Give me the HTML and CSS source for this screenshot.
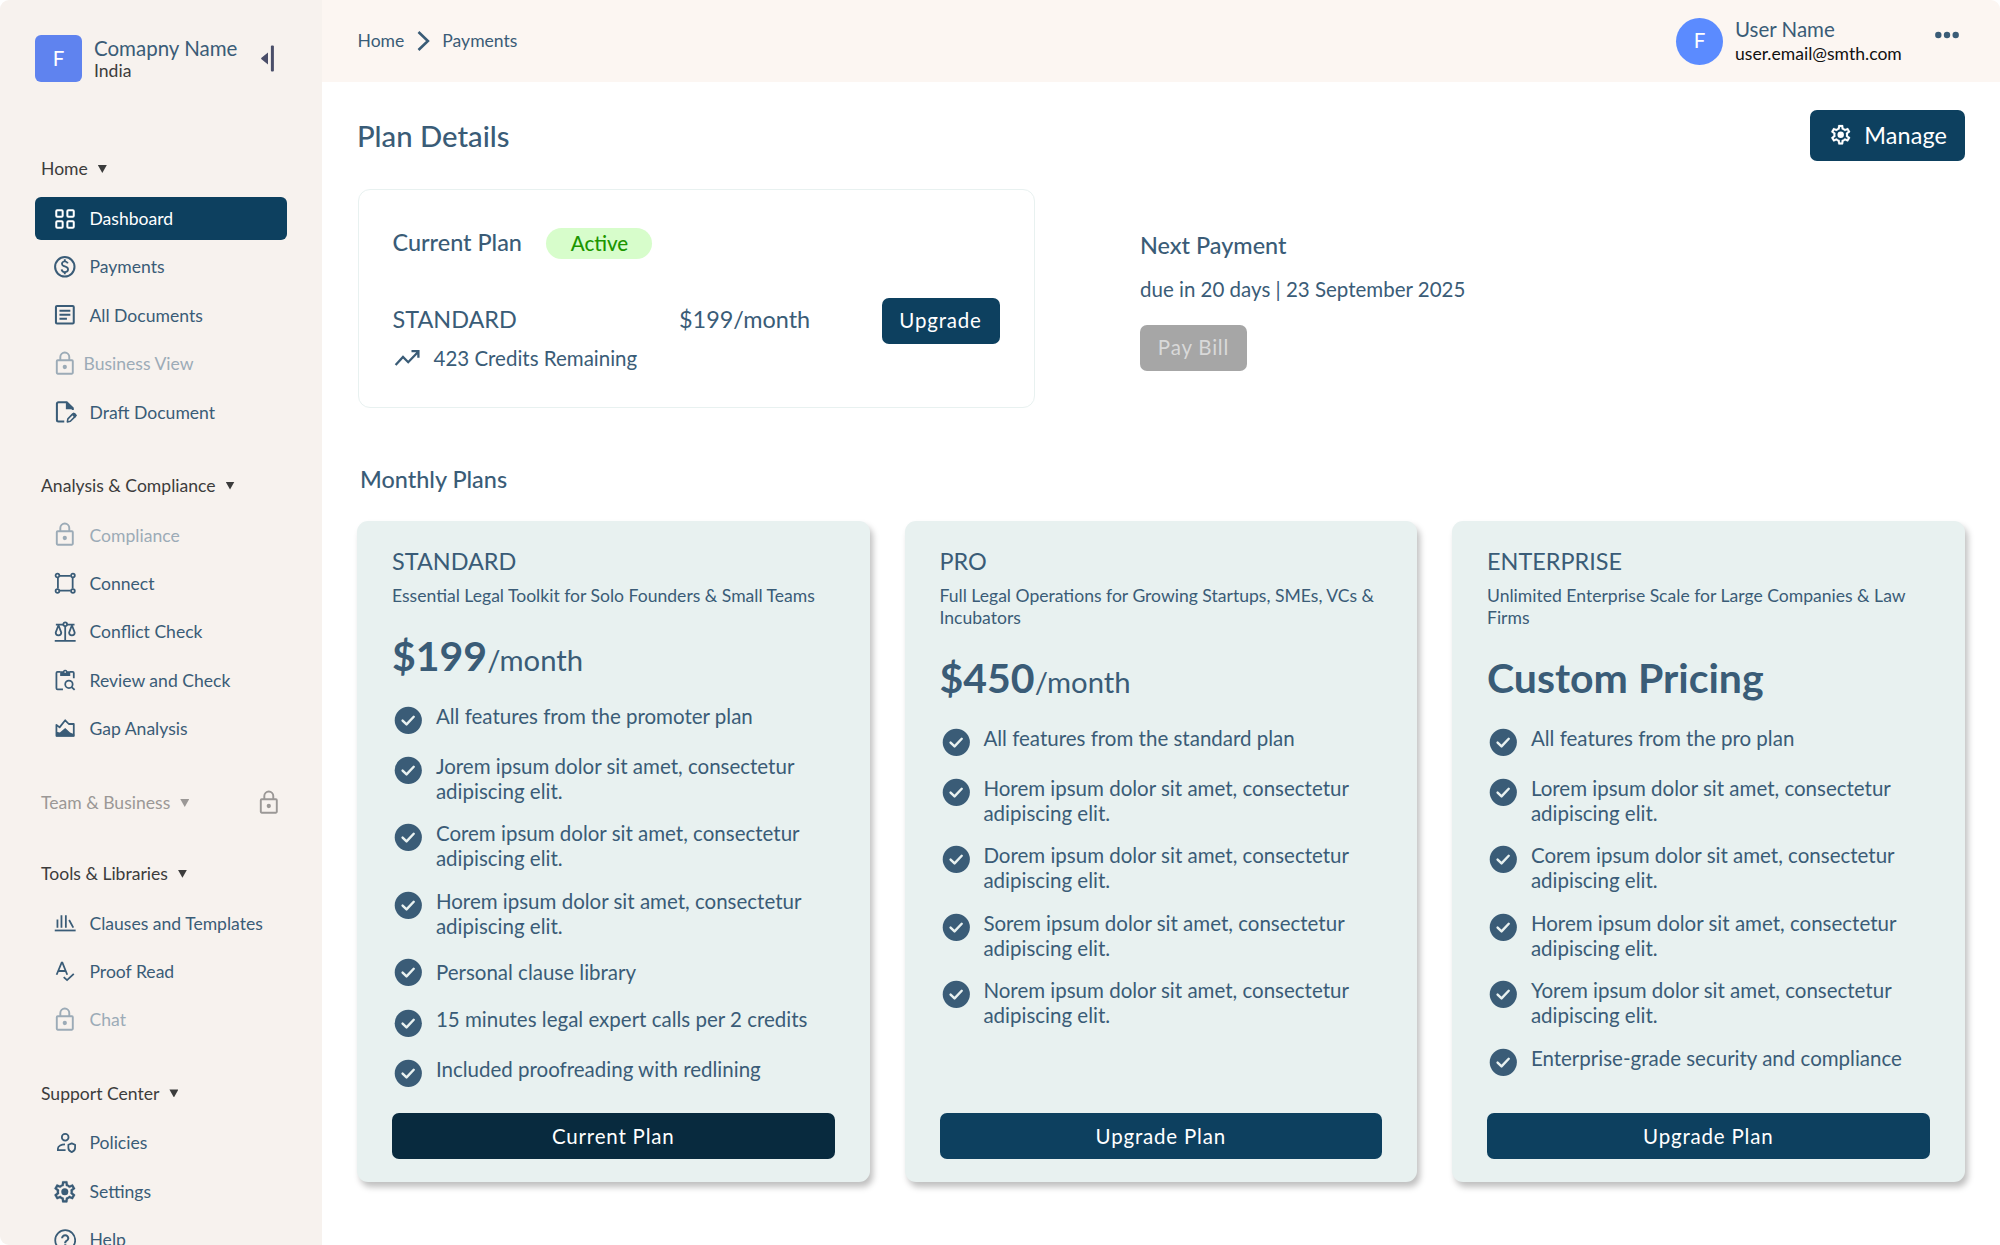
FILE: index.html
```html
<!DOCTYPE html>
<html lang="en">
<head>
<meta charset="utf-8">
<title>Payments</title>
<link rel="stylesheet" href="styles.css">
</head>
<body>
<svg class="sprite" aria-hidden="true">
  <symbol id="lock" viewBox="0 0 24 24"><rect x="4.5" y="8.7" width="15" height="12.6" rx=".8" fill="none" stroke="currentColor" stroke-width="1.8"/><path d="M7.800 8.700V5.600a4.200 4.200 0 0 1 8.400 0v3.100" fill="none" stroke="currentColor" stroke-width="1.8"/><circle cx="12" cy="15" r="2" fill="currentColor"/></symbol>
  <symbol id="check" viewBox="0 0 24 24"><circle cx="12" cy="12" r="10" fill="currentColor"/><path d="M7.8 12.2l2.9 2.8 5.3-5.6" fill="none" stroke="#e8f1f0" stroke-width="1.8" stroke-linecap="round" stroke-linejoin="round"/></symbol>
  <symbol id="gear" viewBox="0 0 24 24"><path fill="currentColor" stroke="currentColor" stroke-width=".2" d="M19.43 12.98c.04-.32.07-.64.07-.98 0-.34-.03-.66-.07-.98l2.11-1.65c.19-.15.24-.42.12-.64l-2-3.46c-.09-.16-.26-.25-.44-.25-.06 0-.12.01-.17.03l-2.49 1c-.52-.4-1.08-.73-1.69-.98l-.38-2.65C14.46 2.18 14.25 2 14 2h-4c-.25 0-.46.18-.49.42l-.38 2.65c-.61.25-1.17.59-1.69.98l-2.49-1c-.06-.02-.12-.03-.18-.03-.17 0-.34.09-.43.25l-2 3.46c-.13.22-.07.49.12.64l2.11 1.65c-.04.32-.07.65-.07.98 0 .33.03.66.07.98l-2.11 1.65c-.19.15-.24.42-.12.64l2 3.46c.09.16.26.25.44.25.06 0 .12-.01.17-.03l2.49-1c.52.4 1.08.73 1.69.98l.38 2.65c.03.24.24.42.49.42h4c.25 0 .46-.18.49-.42l.38-2.65c.61-.25 1.17-.59 1.69-.98l2.49 1c.06.02.12.03.18.03.17 0 .34-.09.43-.25l2-3.46c.12-.22.07-.49-.12-.64l-2.11-1.65zm-1.98-1.71c.04.31.05.52.05.73 0 .21-.02.43-.05.73l-.14 1.13.89.7 1.08.84-.7 1.21-1.27-.51-1.04-.42-.9.68c-.43.32-.84.56-1.25.73l-1.06.43-.16 1.13-.2 1.35h-1.4l-.19-1.35-.16-1.13-1.06-.43c-.43-.18-.83-.41-1.23-.71l-.91-.7-1.06.43-1.27.51-.7-1.21 1.08-.84.89-.7-.14-1.13c-.03-.31-.05-.54-.05-.74s.02-.43.05-.73l.14-1.13-.89-.7-1.08-.84.7-1.21 1.27.51 1.04.42.9-.68c.43-.32.84-.56 1.25-.73l1.06-.43.16-1.13.2-1.35h1.39l.19 1.35.16 1.13 1.06.43c.43.18.83.41 1.23.71l.91.7 1.06-.43 1.27-.51.7 1.21-1.07.85-.89.7.14 1.13z"/><circle cx="12" cy="12" r="3.3" fill="currentColor"/></symbol>
</svg>

<div class="app">
  <aside class="sidebar">
    <div class="company">
      <div class="logo">F</div>
      <div class="company-text">
        <div class="name">Comapny Name</div>
        <div class="place">India</div>
      </div>
      <svg class="collapse" viewBox="0 0 13 27"><path d="M7 7.5v12L.8 14.6a1.4 1.4 0 0 1 0-2.2z" fill="#4a4e69"/><rect x="9.9" y=".5" width="3" height="26" rx="1" fill="#4a4e69"/></svg>
    </div>

    <section class="group">
      <h2 class="group-title">Home <i class="caret"></i></h2>
      <a class="item active"><svg class="icon" viewBox="0 0 24 24"><g class="line"><rect x="4" y="4" width="6" height="6" rx=".9"/><rect x="14.4" y="4" width="6" height="6" rx=".9"/><rect x="4" y="14.4" width="6" height="6" rx=".9"/><rect x="14.4" y="14.4" width="6" height="6" rx=".9"/></g></svg>Dashboard</a>
      <a class="item"><svg class="icon" viewBox="0 0 24 24"><circle class="line" cx="12" cy="12" r="9.1"/><path fill="currentColor" d="M12.89 11.1c-1.78-.59-2.64-.96-2.64-1.9 0-1.02 1.11-1.39 1.81-1.39 1.31 0 1.79.99 1.9 1.34l1.58-.67c-.15-.44-.82-1.91-2.66-2.23V5h-1.75v1.26c-2.6.56-2.62 2.85-2.62 2.96 0 2.27 2.25 2.91 3.35 3.31 1.58.56 2.28 1.07 2.28 2.03 0 1.13-1.05 1.61-1.98 1.61-1.82 0-2.34-1.87-2.4-2.09L8.1 14.75c.63 2.19 2.28 2.78 3.02 2.96V19h1.75v-1.24c.52-.09 3.02-.59 3.02-3.22.01-1.39-.6-2.61-3-3.44z"/></svg>Payments</a>
      <a class="item"><svg class="icon" viewBox="0 0 24 24"><rect class="line" x="3.7" y="3.8" width="16.7" height="16.4" rx="1"/><path class="line" d="M7 8.2h10.2M7 12h10.2M7 15.8h7"/></svg>All Documents</a>
      <a class="item locked tight"><svg class="icon"><use href="#lock"/></svg>Business View</a>
      <a class="item"><svg class="icon" viewBox="0 0 24 24"><path class="line" d="M11.5 21H6a1.4 1.4 0 0 1-1.4-1.4V4.4A1.4 1.4 0 0 1 6 3h7.8l5.7 5.7v1.6"/><path fill="currentColor" d="M13 2.6l6.9 6.900H13z"/><path d="M14.900 18.600l4.600-4.600a1.300 1.300 0 0 1 1.900 0l.4.4a1.300 1.300 0 0 1 0 1.900l-4.600 4.600-2.800.6z" fill="none" stroke="currentColor" stroke-width="1.5" stroke-linejoin="round"/><path fill="currentColor" d="M18.400 14.600l2-1.900 3 2.800-2 2.200z"/></svg>Draft Document</a>
    </section>

    <section class="group">
      <h2 class="group-title">Analysis &amp; Compliance <i class="caret"></i></h2>
      <a class="item locked"><svg class="icon"><use href="#lock"/></svg>Compliance</a>
      <a class="item"><svg class="icon snug" viewBox="0 0 24 24"><g class="line"><path d="M6.2 4.2h11.6M6.2 20h11.6M4.2 6.2v11.6M20 6.2v11.6"/><circle cx="3.7" cy="3.7" r="2"/><circle cx="20.3" cy="3.7" r="2"/><circle cx="3.7" cy="20.3" r="2"/><circle cx="20.3" cy="20.3" r="2"/></g></svg>Connect</a>
      <a class="item"><svg class="icon snug" viewBox="0 0 24 24"><g class="line"><path d="M.8 21.200h22.400M12 5.400v15.800"/><path d="M2 3.800h8M14 3.800h8"/><circle cx="12" cy="3.400" r="2"/><path stroke-linejoin="round" d="M4.800 4.600L1.800 12.400a3 3 0 0 0 6 0zM19.200 4.600l-3 7.800a3 3 0 0 0 6 0z"/></g></svg>Conflict Check</a>
      <a class="item"><svg class="icon snug" viewBox="0 0 24 24"><path class="line" d="M9.600 21.800H3.800a1.200 1.200 0 0 1-1.200-1.200V4.300a1.200 1.200 0 0 1 1.200-1.200h3M17 3.100h3a1.200 1.200 0 0 1 1.200 1.200v5.500"/><path fill="currentColor" d="M6.600 2.300h3a2.600 2.600 0 0 1 4.800 0h3v5.200H6.600z"/><circle cx="12" cy="3.200" r=".9" fill="#f7f2ee"/><circle class="line" cx="16" cy="16.400" r="4"/><path class="line" d="M18.900 19.300l3.200 3.200"/></svg>Review and Check</a>
      <a class="item"><svg class="icon snug" viewBox="0 0 24 24"><path class="line" stroke-linejoin="round" d="M2.600 20.100V8.400l3.400 2.700 6-7.600 3.900 4h5.300v12.600z"/><path fill="currentColor" d="M2.300 21v-5.200l4 .8 5.700-4.800 5.200 4.800 4.500 2V21z"/></svg>Gap Analysis</a>
    </section>

    <section class="group team">
      <h2 class="group-title muted">Team &amp; Business <i class="caret"></i><svg class="icon end"><use href="#lock"/></svg></h2>
    </section>

    <section class="group">
      <h2 class="group-title">Tools &amp; Libraries <i class="caret"></i></h2>
      <a class="item"><svg class="icon snug" viewBox="0 0 24 24"><g class="line"><path d="M.8 19.800h22.400"/><path d="M3.700 8v9M8 3.500V17M12.700 3.500V17M16.200 8.600l4.500 8.200"/></g></svg>Clauses and Templates</a>
      <a class="item"><svg class="icon snug" viewBox="0 0 24 24"><path class="line" d="M2.800 15.800L8.200 2.800h.8l5.200 13M4.600 11.800h7.900"/><path class="line" d="M10.400 18.400l3.600 3.200 7.200-6.800"/></svg>Proof Read</a>
      <a class="item locked"><svg class="icon"><use href="#lock"/></svg>Chat</a>
    </section>

    <section class="group">
      <h2 class="group-title">Support Center <i class="caret"></i></h2>
      <a class="item"><svg class="icon snug" viewBox="0 0 24 24"><g class="line"><circle cx="12" cy="5.600" r="3.600"/><path d="M11.800 13.200c-3.800 0-7.600 1.600-7.600 4.600v1.700h8.200"/><path stroke-linejoin="round" d="M19 12.200l3.600 1.500v3.500c0 2-1.500 3.500-3.600 4.300-2.100-.8-3.600-2.300-3.600-4.300v-3.500z"/></g></svg>Policies</a>
      <a class="item"><svg class="icon"><use href="#gear"/></svg>Settings</a>
      <a class="item"><svg class="icon snug" viewBox="0 0 24 24"><circle class="line" cx="12" cy="12" r="10.700"/><path fill="currentColor" d="M11 18.500h2.200v-2.200H11v2.200zm1-13c-2.430 0-4.400 1.970-4.400 4.400h2.200c0-1.210.99-2.200 2.200-2.200s2.200.99 2.200 2.200c0 2.200-3.300 1.930-3.300 5.500h2.200c0-2.480 3.300-2.750 3.300-5.500 0-2.430-1.970-4.400-4.400-4.400z"/></svg>Help</a>
    </section>
  </aside>

  <div class="main">
    <header class="topbar">
      <nav class="crumbs">
        <span>Home</span>
        <svg class="chevron" viewBox="0 0 13 20"><path d="M1.500 1l9.400 9-9.400 9" fill="none" stroke="currentColor" stroke-width="2.600"/></svg>
        <span>Payments</span>
      </nav>
      <div class="user">
        <div class="avatar">F</div>
        <div class="user-text">
          <div class="name">User Name</div>
          <div class="email">user.email@smth.com</div>
        </div>
        <svg class="dots" viewBox="0 0 24 8"><circle cx="3.300" cy="4" r="3.200"/><circle cx="12" cy="4" r="3.200"/><circle cx="20.700" cy="4" r="3.200"/></svg>
      </div>
    </header>

    <main class="content">
      <div class="title-row">
        <h1>Plan Details</h1>
        <button class="btn manage"><svg class="icon"><use href="#gear"/></svg>Manage</button>
      </div>

      <div class="overview">
        <section class="current">
          <div class="current-head"><h3>Current Plan</h3><span class="pill">Active</span></div>
          <div class="current-row">
            <span class="plan-name">STANDARD</span>
            <span class="plan-price">$199/month</span>
            <button class="btn">Upgrade</button>
          </div>
          <div class="credits">
            <svg viewBox="0 0 26 18"><path d="M1.600 16l7.400-8 5.200 5.200L24 3M17.500 2.200h6.900v6.600" fill="none" stroke="currentColor" stroke-width="2.300"/></svg>
            423 Credits Remaining
          </div>
        </section>
        <section class="next">
          <h3>Next Payment</h3>
          <p>due in 20 days | 23 September 2025</p>
          <button class="btn disabled">Pay Bill</button>
        </section>
      </div>

      <h3 class="plans-title">Monthly Plans</h3>
      <div class="plans">
        <article class="plan">
          <h4>STANDARD</h4>
          <p class="sub">Essential Legal Toolkit for Solo Founders &amp; Small Teams</p>
          <div class="price">$199<small>/month</small></div>
          <ul>
            <li><svg><use href="#check"/></svg>All features from the promoter plan</li>
            <li><svg><use href="#check"/></svg>Jorem ipsum dolor sit amet, consectetur adipiscing elit.</li>
            <li><svg><use href="#check"/></svg>Corem ipsum dolor sit amet, consectetur adipiscing elit.</li>
            <li><svg><use href="#check"/></svg>Horem ipsum dolor sit amet, consectetur adipiscing elit.</li>
            <li class="centered"><svg><use href="#check"/></svg>Personal clause library</li>
            <li><svg><use href="#check"/></svg>15 minutes legal expert calls per 2 credits</li>
            <li><svg><use href="#check"/></svg>Included proofreading with redlining</li>
          </ul>
          <button class="btn chosen">Current Plan</button>
        </article>
        <article class="plan">
          <h4>PRO</h4>
          <p class="sub">Full Legal Operations for Growing Startups, SMEs, VCs &amp; Incubators</p>
          <div class="price">$450<small>/month</small></div>
          <ul>
            <li><svg><use href="#check"/></svg>All features from the standard plan</li>
            <li><svg><use href="#check"/></svg>Horem ipsum dolor sit amet, consectetur adipiscing elit.</li>
            <li><svg><use href="#check"/></svg>Dorem ipsum dolor sit amet, consectetur adipiscing elit.</li>
            <li><svg><use href="#check"/></svg>Sorem ipsum dolor sit amet, consectetur adipiscing elit.</li>
            <li><svg><use href="#check"/></svg>Norem ipsum dolor sit amet, consectetur adipiscing elit.</li>
          </ul>
          <button class="btn">Upgrade Plan</button>
        </article>
        <article class="plan">
          <h4>ENTERPRISE</h4>
          <p class="sub">Unlimited Enterprise Scale for Large Companies &amp; Law Firms</p>
          <div class="price">Custom Pricing</div>
          <ul>
            <li><svg><use href="#check"/></svg>All features from the pro plan</li>
            <li><svg><use href="#check"/></svg>Lorem ipsum dolor sit amet, consectetur adipiscing elit.</li>
            <li><svg><use href="#check"/></svg>Corem ipsum dolor sit amet, consectetur adipiscing elit.</li>
            <li><svg><use href="#check"/></svg>Horem ipsum dolor sit amet, consectetur adipiscing elit.</li>
            <li><svg><use href="#check"/></svg>Yorem ipsum dolor sit amet, consectetur adipiscing elit.</li>
            <li><svg><use href="#check"/></svg>Enterprise-grade security and compliance</li>
          </ul>
          <button class="btn">Upgrade Plan</button>
        </article>
      </div>
    </main>
  </div>
</div>
</body>
</html>
```
FILE: styles.css
```css
* { box-sizing: border-box; }
body, h1, h2, h3, h4, p, ul { margin: 0; padding: 0; }
body {
  background: #fff;
  color: #3a5c77;
  font-family: Lato, "Open Sans", sans-serif;
  line-height: 1.2;
  height: 1245px;
  overflow: hidden;
}
h1, h3 { font-weight: 500; }
h2, h4 { font-weight: 400; }
ul { list-style: none; }
.sprite { display: none; }

.app {
  display: flex;
  height: 1245px;
  border-radius: 9px;
  overflow: hidden;
}

/* Sidebar */
.sidebar {
  width: 322px;
  flex: none;
  background: #f7f2ee;
  padding: 35px 35px 0;
  overflow: hidden;
}
.company {
  display: flex;
  align-items: center;
  height: 47px;
  margin-bottom: 72px;
}
.logo {
  width: 47px;
  height: 47px;
  border-radius: 6px;
  background: #5f83ef;
  color: #fff;
  font-size: 20.5px;
  padding-bottom: 1px;
  display: flex;
  align-items: center;
  justify-content: center;
}
.company-text { margin-left: 12px; flex: 1; }
.name { font-size: 20.5px; line-height: 24px; }
.place { font-size: 17.57px; line-height: 21px; color: #3c3c3c; }
.collapse { width: 13px; height: 27px; margin-right: 13px; }

.group { margin-bottom: 37.3px; }
.group.team { margin-bottom: 40.8px; padding-top: .8px; }
.group-title {
  display: flex;
  align-items: center;
  height: 30px;
  padding-left: 6px;
  margin-bottom: 13.3px;
  color: #3c3c3c;
  font-size: 17.57px;
}
.team .group-title { margin-bottom: 0; }
.group-title.muted { color: #9b9896; }
.caret {
  width: 9px;
  height: 8px;
  margin-left: 10px;
  background: currentColor;
  clip-path: polygon(0 0, 100% 0, 50% 100%);
}
.icon {
  width: 25.6px;
  height: 25.6px;
  flex: none;
}
/* Glyphs drawn to the edge of their view box */
.icon.snug { width: 22.4px; height: 22.4px; margin: 0 1.6px; }
.icon.end { margin-left: auto; margin-right: 5px; }
.line { fill: none; stroke: currentColor; stroke-width: 1.9; }
.item {
  display: flex;
  align-items: center;
  gap: 11.5px;
  height: 42.4px;
  margin-bottom: 6px;
  padding-left: 17.4px;
  border-radius: 6px;
  font-size: 17.57px;
}
.item:last-child { margin-bottom: 0; }
.item.active { background: #0d405f; color: #fff; }
.item.locked { color: #9cabb7; }
.item.tight { gap: 5.5px; }

/* Top bar */
.main { flex: 1; min-width: 0; }
.topbar {
  height: 82px;
  background: #fcf6f2;
  padding: 0 41px 0 35.5px;
  display: flex;
  align-items: center;
  justify-content: space-between;
}
.crumbs {
  display: flex;
  align-items: center;
  font-size: 17.57px;
}
.chevron { width: 13px; height: 20px; margin: 0 12px 0 13px; }
.user { display: flex; align-items: center; }
.avatar {
  width: 47px;
  height: 47px;
  border-radius: 50%;
  background: #5b8bff;
  color: #fff;
  font-size: 20.5px;
  padding-bottom: 1px;
  display: flex;
  align-items: center;
  justify-content: center;
}
.user-text { margin-left: 12px; width: 200px; }
.user-text .name { line-height: 23px; }
.email { font-size: 17.57px; line-height: 21px; padding-top: 2px; color: #111; }
.dots { width: 24px; height: 8px; fill: currentColor; margin-bottom: 12px; }

/* Content */
.content { padding: 27px 35.5px 0 35px; }
.title-row {
  display: flex;
  justify-content: space-between;
  align-items: center;
  height: 52px;
}
h1 { font-size: 29.28px; padding-top: 1px; }
.btn {
  display: flex;
  align-items: center;
  justify-content: center;
  height: 46px;
  padding: 0;
  border: 0;
  border-radius: 7px;
  background: #0d405f;
  color: #fff;
  font: 400 20.5px/1.2 Lato, sans-serif;
  letter-spacing: .8px;
}
.btn.manage {
  width: 155px;
  height: 51px;
  gap: 12px;
  padding-left: 2px;
  font-size: 23.43px;
  letter-spacing: .1px;
}
.manage .icon { width: 23.4px; height: 23.4px; }
.overview { display: flex; margin-top: 27.5px; padding-left: .5px; }
.current {
  width: 677px;
  height: 219px;
  border: 1.5px solid #e8f1f0;
  border-radius: 12px;
  padding: 38px 34px 0;
}
h3 { font-size: 23.43px; }
.current-head { display: flex; align-items: center; height: 31px; }
.current-head h3 { padding-bottom: 1px; }
.pill {
  width: 106px;
  height: 31px;
  margin-left: 24.5px;
  border-radius: 16px;
  background: #d7fdcb;
  color: #1c9600;
  font-size: 20.5px;
  line-height: 31px;
  text-align: center;
  font-weight: 500;
}
.current-row {
  display: flex;
  align-items: center;
  height: 46px;
  margin-top: 39px;
  font-size: 23.43px;
}
.plan-name { width: 286.5px; padding-bottom: 2px; }
.plan-price { flex: 1; padding-bottom: 2px; }
.current-row .btn { width: 118px; }
.credits {
  display: flex;
  align-items: center;
  gap: 14px;
  margin-top: 2px;
  padding-left: 1px;
  font-size: 20.5px;
}
.credits svg { width: 26px; height: 18px; }
.next { padding: 42px 0 0 105.5px; }
.next p { font-size: 20.5px; margin: 18px 0 23.5px; }
.next .btn { width: 107px; }
.btn.disabled { background: #a6a6a6; color: #d9d9d9; }

.plans-title { margin: 57px 0 0 3px; }
.plans {
  display: grid;
  grid-template-columns: repeat(3, 1fr);
  gap: 35px;
  margin-top: 28.7px;
}
.plan {
  display: flex;
  flex-direction: column;
  height: 661px;
  padding: 25.8px 35px 23px;
  border-radius: 11px;
  background: #e8f1f0;
  box-shadow: 3px 5px 6px rgba(0, 0, 0, .25);
}
h4 { font-size: 23.43px; }
.sub { font-size: 17.57px; line-height: 22px; margin-top: 9.3px; }
.price {
  margin-top: 24.5px;
  height: 49.2px;
  font-size: 41px;
  line-height: 49.2px;
  font-weight: 700;
}
.price small { font-size: 29.28px; line-height: 1; font-weight: 400; }
.plan ul {
  display: flex;
  flex-direction: column;
  gap: 17.6px;
  margin-top: 23.3px;
  flex: 1;
}
.plan li {
  display: flex;
  gap: 11.3px;
  font-size: 20.5px;
  line-height: 25px;
}
.plan li svg { width: 32.6px; height: 32.6px; flex: none; }
.plan li.centered { align-items: center; }
.plan .btn { width: 100%; }
.btn.chosen { background: #082a3e; }
```
